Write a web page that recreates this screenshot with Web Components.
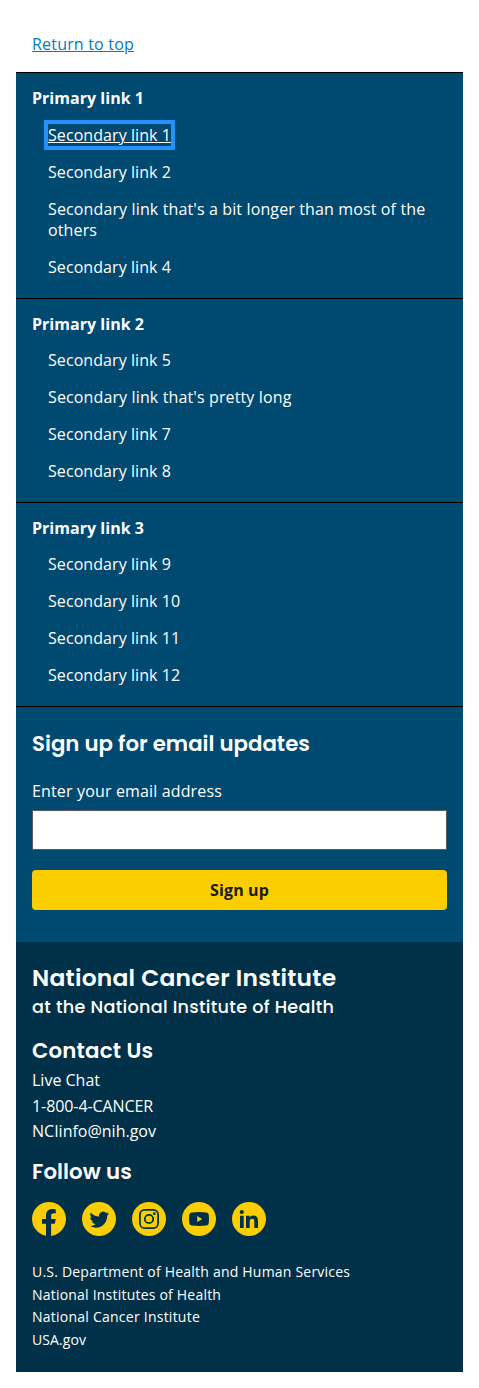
<!DOCTYPE html>
<html lang="en">
<head>
<meta charset="utf-8">
<title>National Cancer Institute footer</title>
<style>
body{margin:0;background:#fff;font:16px/21px "Open Sans",sans-serif;color:#fff}
</style>
</head>
<body>
<nci-footer></nci-footer>
<script>
const define = (name, html) => {
  const t = document.createElement('template');
  t.innerHTML = html;
  customElements.define(name, class extends HTMLElement {
    constructor() {
      super();
      this.attachShadow({mode: 'open'}).append(t.content.cloneNode(true));
    }
  });
};

define('nci-heading', `
<style>
:host{display:block;font-family:Poppins,Inter,sans-serif;font-weight:600;font-feature-settings:"cv11","ss03";white-space:nowrap}
</style><slot></slot>`);

define('nci-link', `
<style>
:host{display:block}
a{color:inherit;text-decoration:none}
:host([focused]) a{text-decoration:underline;outline:4px solid #2491ff;outline-offset:0}
:host([top]){color:#007bbd;letter-spacing:.19px}
:host([top]) a{text-decoration:underline}
</style><a><slot></slot></a>`);

define('nci-nav-section', `
<style>
:host{display:block;border-top:1px solid #000;padding:15px 16px 20px}
.title{font-weight:700;letter-spacing:.03px}
.links{display:grid;gap:16px;padding-left:16px;margin-top:var(--lead,15px);letter-spacing:.07px}
::slotted(.long){letter-spacing:.13px}
</style>
<div class="title"><slot name="title"></slot></div>
<div class="links"><slot></slot></div>`);

define('nci-signup', `
<style>
:host{display:block;border-top:1px solid #000;padding:22px 16px 32px}
nci-heading{font-size:21.3px;line-height:30px}
label{display:block;margin-top:22px;line-height:21px;letter-spacing:.15px}
input{display:block;box-sizing:border-box;width:100%;height:40px;margin:8px 0 20px;border:1px solid #565c65;border-radius:0;background:#fff;padding:8px}
button{display:block;width:100%;height:40px;border:0;border-radius:4px;background:#face00;color:#1b1b1b;font:700 16px/16px "Open Sans",sans-serif;letter-spacing:.14px;padding:0}
</style>
<nci-heading>Sign up for email updates</nci-heading>
<label for="email">Enter your email address</label>
<input id="email" type="email">
<button type="button">Sign up</button>`);

define('nci-social', `
<style>
:host{display:flex;gap:16px}
svg{display:block;width:34px;height:34px;fill:#003149}
circle.bg{fill:#face00}
</style>
<svg viewBox="0 0 34 34"><circle class="bg" cx="17" cy="17" r="17"/><path d="M14 34V21.8H10V17h4v-3.400C14 9.300 16.500 7 20.200 7c1.800 0 3.600.3 3.600.3v4h-2c-2 0-2.700 1.300-2.700 2.500V17h4.600l-.8 4.800h-3.800V34z"/></svg>
<svg viewBox="0 0 34 34"><circle class="bg" cx="17" cy="17" r="17"/><path transform="translate(7.500 7.800) scale(.82)" d="M23.950 4.570a10 10 0 0 1-2.820.78 4.960 4.960 0 0 0 2.160-2.720c-.95.55-2.010.95-3.130 1.180a4.920 4.920 0 0 0-8.380 4.480C7.690 8.100 4.070 6.130 1.640 3.160a4.820 4.820 0 0 0-.67 2.480c0 1.710.87 3.210 2.190 4.100a4.900 4.900 0 0 1-2.230-.62v.06a4.920 4.920 0 0 0 3.950 4.830 5 5 0 0 1-2.210.08 4.940 4.940 0 0 0 4.600 3.420A9.870 9.870 0 0 1 0 19.540a13.990 13.990 0 0 0 7.550 2.210c9.050 0 14-7.500 14-13.980 0-.21 0-.42-.02-.63a9.940 9.940 0 0 0 2.460-2.550z"/></svg>
<svg viewBox="0 0 34 34"><circle class="bg" cx="17" cy="17" r="17"/><g fill="none" stroke="#003149" stroke-width="1.800"><rect x="7.900" y="7.900" width="18.200" height="18.200" rx="4.800"/><circle cx="17" cy="17" r="4.200"/></g><circle cx="22.300" cy="11.700" r="1.350"/></svg>
<svg viewBox="0 0 34 34"><circle class="bg" cx="17" cy="17" r="17"/><path fill-rule="evenodd" d="M9.700 10.400Q17 9.600 24.300 10.400q2.300.2 2.500 2.500.4 4.100 0 8.200-.2 2.300-2.500 2.500-7.300.8-14.600 0-2.300-.2-2.500-2.500-.4-4.100 0-8.200.2-2.300 2.500-2.500zM15.200 14v6l5-3z"/></svg>
<svg viewBox="0 0 34 34"><circle class="bg" cx="17" cy="17" r="17"/><circle cx="9.800" cy="10" r="2.100"/><path d="M8 13.700h3.700V26H8zM14 13.700h3.500v1.700c.5-1 1.800-2 3.700-2 3.900 0 4.800 2.500 4.800 5.900V26h-3.700v-6c0-1.500 0-3.300-2.100-3.300s-2.500 1.600-2.500 3.200V26H14z"/></svg>`);

define('nci-identity', `
<style>
:host{display:block;background:#003149;padding:18px 16px 20.300px}
.name{font-size:23.400px;line-height:36px;letter-spacing:.25px}
.parent{font-size:17.600px;line-height:24px;margin-top:-1px;font-weight:500;letter-spacing:.29px}
.contact,.follow{font-size:21.300px;line-height:30px}
.contact{margin-top:17px;letter-spacing:.2px}
.follow{margin-top:12px;letter-spacing:.1px}
.info{line-height:25.600px;margin-top:2px}
.phone{letter-spacing:-.08px}
nci-social{margin-top:15px}
.agencies{margin-top:25.300px;font-size:14px;line-height:22.600px;letter-spacing:.21px}
.nci{letter-spacing:.24px}
.usa{letter-spacing:.1px}
</style>
<nci-heading class="name">National Cancer Institute</nci-heading>
<nci-heading class="parent">at the National Institute of Health</nci-heading>
<nci-heading class="contact">Contact Us</nci-heading>
<div class="info"><nci-link>Live Chat</nci-link><nci-link class="phone">1-800-4-CANCER</nci-link><nci-link>NCIinfo@nih.gov</nci-link></div>
<nci-heading class="follow">Follow us</nci-heading>
<nci-social></nci-social>
<div class="agencies"><nci-link>U.S. Department of Health and Human Services</nci-link><nci-link>National Institutes of Health</nci-link><nci-link class="nci">National Cancer Institute</nci-link><nci-link class="usa">USA.gov</nci-link></div>`);

define('nci-footer', `
<style>
:host{display:block;padding:16px}
.top{padding:18px 16px 17px}
.main{background:#004971}
.first{--lead:16px}
</style>
<div class="top"><nci-link top>Return to top</nci-link></div>
<div class="main">
<nci-nav-section class="first"><span slot="title">Primary link 1</span><nci-link focused>Secondary link 1</nci-link><nci-link>Secondary link 2</nci-link><nci-link class="long">Secondary link that's a bit longer than most of the others</nci-link><nci-link>Secondary link 4</nci-link></nci-nav-section>
<nci-nav-section><span slot="title">Primary link 2</span><nci-link>Secondary link 5</nci-link><nci-link class="long">Secondary link that's pretty long</nci-link><nci-link>Secondary link 7</nci-link><nci-link>Secondary link 8</nci-link></nci-nav-section>
<nci-nav-section><span slot="title">Primary link 3</span><nci-link>Secondary link 9</nci-link><nci-link>Secondary link 10</nci-link><nci-link>Secondary link 11</nci-link><nci-link>Secondary link 12</nci-link></nci-nav-section>
<nci-signup></nci-signup>
</div>
<nci-identity></nci-identity>`);
</script>
</body>
</html>
